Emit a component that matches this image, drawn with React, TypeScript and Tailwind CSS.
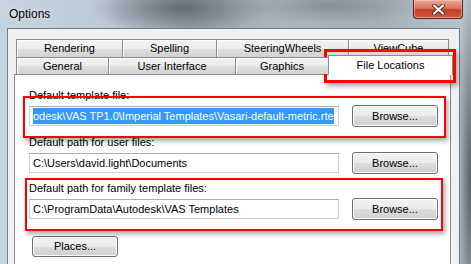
import React from 'react';

const TAB_BG =
  'bg-[linear-gradient(#f3f3f3_0%,#ececec_50%,#dfdfdf_51%,#d2d2d2_100%)]';
const BTN_BG =
  'bg-[linear-gradient(#f2f2f2_0%,#ebebeb_50%,#dddddd_51%,#cfcfcf_100%)]';

function Tab({ label, className }: { label: string; className: string }) {
  return (
    <div
      className={`flex h-full shrink-0 items-center justify-center border-l border-t border-[#898c95] text-[11px] text-black shadow-[inset_1px_1px_0_#fcfcfc] ${TAB_BG} ${className}`}
    >
      {label}
    </div>
  );
}

function Button({ label, className }: { label: string; className: string }) {
  return (
    <div
      className={`flex shrink-0 items-center justify-center rounded-[3px] border border-[#707070] text-[11px] text-black shadow-[inset_0_0_0_1px_#fbfbfb] ${BTN_BG} ${className}`}
    >
      {label}
    </div>
  );
}

function PathField({ children }: { children: React.ReactNode }) {
  return (
    <div className="flex h-[20px] w-[310px] shrink-0 items-center overflow-hidden whitespace-nowrap border border-[#ccd1d8] border-t-[#abadb3] bg-white pl-[3px] text-[11px] leading-[16px] text-black">
      {children}
    </div>
  );
}

export default function App() {
  return (
    <div className="relative h-[264px] w-[471px] overflow-hidden font-['Liberation_Sans',Arial,sans-serif] bg-[radial-gradient(ellipse_90px_26px_at_180px_8px,rgba(60,68,76,0.6),transparent),radial-gradient(ellipse_90px_18px_at_330px_6px,rgba(85,95,105,0.4),transparent),radial-gradient(ellipse_14px_200px_at_471px_180px,rgba(60,66,74,0.8),transparent),linear-gradient(90deg,#c6d4df_0%,#bccad5_22%,#9aa6b0_40%,#aab5be_60%,#a3aeb8_80%,#b9c4cd_100%)]">
      {/* title bar */}
      <div className="flex h-[28px] items-center pl-[9px] text-[12px] text-black [text-shadow:0_0_6px_rgba(255,255,255,0.8)]">
        Options
      </div>

      {/* close button */}
      <div className="absolute left-[413px] top-0 flex h-[19px] w-[50px] items-center justify-center rounded-b-[4px] border border-t-0 border-[#5b2318] bg-[linear-gradient(#e9a896_0%,#d8755c_45%,#c23f22_55%,#d0593b_100%)] shadow-[inset_0_0_0_1px_rgba(255,210,200,0.5)]">
        <svg width="13" height="11" viewBox="0 0 13 11">
          <path d="M2 1.5 L11 9.5 M11 1.5 L2 9.5" stroke="#5a2418" strokeWidth="4" strokeLinecap="round" />
          <path d="M2 1.5 L11 9.5 M11 1.5 L2 9.5" stroke="#ffffff" strokeWidth="2.2" strokeLinecap="round" />
        </svg>
      </div>

      {/* client area */}
      <div className="ml-[7px] h-[240px] w-[453px] border-l border-r border-t border-[#6f7d89] bg-[#f0f0f0] pl-[6px] pt-[10px]">
        <div className="w-[437px]">
          {/* tab row 1 */}
          <div className="flex h-[18px] pl-[2px]">
            <Tab label="Rendering" className="w-[106px]" />
            <Tab label="Spelling" className="w-[94px]" />
            <Tab label="SteeringWheels" className="w-[132px]" />
            <Tab label="ViewCube" className="w-[101px] border-r" />
          </div>
          {/* tab row 2 */}
          <div className="relative z-10 flex h-[17px] items-end pl-[2px]">
            <Tab label="General" className="w-[92px]" />
            <Tab label="User Interface" className="w-[127px]" />
            <Tab label="Graphics" className="w-[93px]" />
            <div className="-mb-px flex h-[20px] w-[125px] shrink-0 items-center justify-center border-l border-r border-t border-[#898c95] bg-white text-[11px] text-black">
              File Locations
            </div>
          </div>

          {/* tab page */}
          <div className="h-[200px] border border-[#898c95] bg-white pl-[14px]">
            <div className="mt-[13px] text-[11px] leading-[14px] text-black">Default template file:</div>
            <div className="mt-[3px] flex h-[22px] items-center gap-[13px]">
              <PathField>
                <span className="bg-[#3399ff] text-white">
                  odesk\VAS TP1.0\Imperial Templates\Vasari-default-metric.rte
                </span>
              </PathField>
              <Button label="Browse..." className="h-[22px] w-[86px]" />
            </div>

            <div className="mt-[8px] text-[11px] leading-[14px] text-black">Default path for user files:</div>
            <div className="mt-[3px] flex h-[22px] items-center gap-[13px]">
              <PathField>C:\Users\david.light\Documents</PathField>
              <Button label="Browse..." className="h-[22px] w-[86px]" />
            </div>

            <div className="mt-[7px] text-[11px] leading-[14px] text-black">Default path for family template files:</div>
            <div className="mt-[3px] flex h-[22px] items-center gap-[13px]">
              <PathField>C:\ProgramData\Autodesk\VAS Templates</PathField>
              <Button label="Browse..." className="h-[22px] w-[86px]" />
            </div>

            <Button label="Places..." className="ml-[3px] mt-[16px] h-[21px] w-[86px]" />
          </div>
        </div>
      </div>

      {/* annotation boxes */}
      <div className="absolute left-[324px] top-[49px] h-[34px] w-[132px] border-[3px] border-[#ff0000] shadow-[2px_3px_5px_rgba(0,0,0,0.35)]" />
      <div className="absolute left-[23px] top-[96px] h-[42px] w-[423px] border-[2px] border-[#ff0000] shadow-[2px_3px_5px_rgba(0,0,0,0.35)]" />
      <div className="absolute left-[25px] top-[178px] h-[53px] w-[418px] border-[2px] border-[#ff0000] shadow-[2px_3px_5px_rgba(0,0,0,0.35)]" />
    </div>
  );
}
